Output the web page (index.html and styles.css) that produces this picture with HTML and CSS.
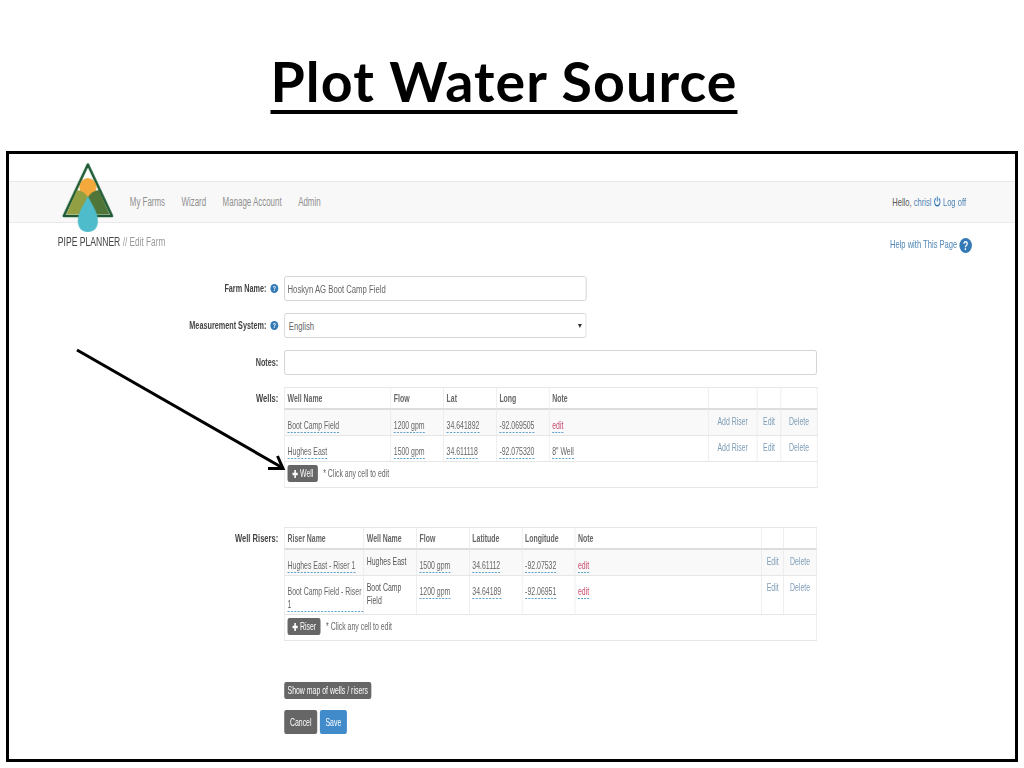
FILE: index.html
```html
<!DOCTYPE html>
<html lang="en">

<head>
    <meta charset="utf-8">
    <title>Plot Water Source</title>
    <link rel="stylesheet" href="styles.css">
</head>

<body>
    <div class="slide">
        <h1 class="slide-title"><span>Plot Water Source</span></h1>

        <div class="frame">
            <!-- the capture is squeezed sideways, so the page inside is laid out wide and scaled -->
            <div class="page">
                <nav class="navbar">
                    <svg class="logo" viewBox="62 162 52 71" preserveAspectRatio="none">
                        <path d="M88 164.500 L112 216 L64 216 Z" fill="#fff" stroke="#1e5b35" stroke-width="2.600" stroke-linejoin="round"/>
                        <ellipse cx="88" cy="187.500" rx="8.500" ry="9.500" fill="#f3a93c"/>
                        <path d="M66.500 214.500 L77 190 Q84 191 88 197 L88 214.500 Z" fill="#929f42"/>
                        <path d="M109.500 214.500 L99 190 Q92 191 88 197 L88 214.500 Z" fill="#4f7638"/>
                        <path d="M88 196 C92 205 98 212 98 221 C98 228 94 232 88 232 C82 232 78 228 78 221 C78 212 84 205 88 196 Z" fill="#4fbccb"/>
                    </svg>
                    <ul class="nav-links">
                        <li><a href="#">My Farms</a></li>
                        <li><a href="#">Wizard</a></li>
                        <li><a href="#">Manage Account</a></li>
                        <li><a href="#">Admin</a></li>
                    </ul>
                    <div class="nav-user">
                        Hello, <a href="#">chrisl</a>
                        <svg class="power" viewBox="0 0 12 12">
                            <path d="M3.500 2.500 A4.500 4.500 0 1 0 8.500 2.500" fill="none" stroke="#337ab7" stroke-width="1.600"/>
                            <path d="M6 0.500 V6" fill="none" stroke="#337ab7" stroke-width="1.600"/>
                        </svg>
                        <a href="#">Log off</a>
                    </div>
                </nav>

                <div class="subhead">
                    <div class="brand">PIPE PLANNER <span>// Edit Farm</span></div>
                    <a href="#" class="page-help">Help with This Page <span class="help-big">?</span></a>
                </div>

                <form class="farm-form">
                    <div class="form-row">
                        <label>Farm Name: <span class="help-dot">?</span></label>
                        <div class="field-box short">Hoskyn AG Boot Camp Field</div>
                    </div>
                    <div class="form-row">
                        <label>Measurement System: <span class="help-dot">?</span></label>
                        <div class="field-box short select">English <span class="caret"></span></div>
                    </div>
                    <div class="form-row">
                        <label>Notes:</label>
                        <div class="field-box"></div>
                    </div>

                    <div class="form-row wells-row">
                        <label class="table-label">Wells:</label>
                        <table class="grid wells">
                            <colgroup>
                                <col class="w161"><col class="w80"><col class="w80"><col class="w80"><col class="w241"><col class="w74"><col class="w36"><col class="w55">
                            </colgroup>
                            <thead>
                                <tr><th>Well Name</th><th>Flow</th><th>Lat</th><th>Long</th><th>Note</th><th></th><th></th><th></th></tr>
                            </thead>
                            <tbody>
                                <tr>
                                    <td><a class="editable">Boot Camp Field</a></td>
                                    <td><a class="editable">1200 gpm</a></td>
                                    <td><a class="editable">34.641892</a></td>
                                    <td><a class="editable">-92.069505</a></td>
                                    <td><a class="editable empty">edit</a></td>
                                    <td class="action"><a href="#">Add Riser</a></td>
                                    <td class="action"><a href="#">Edit</a></td>
                                    <td class="action"><a href="#">Delete</a></td>
                                </tr>
                                <tr>
                                    <td><a class="editable">Hughes East</a></td>
                                    <td><a class="editable">1500 gpm</a></td>
                                    <td><a class="editable">34.611118</a></td>
                                    <td><a class="editable">-92.075320</a></td>
                                    <td><a class="editable">8" Well</a></td>
                                    <td class="action"><a href="#">Add Riser</a></td>
                                    <td class="action"><a href="#">Edit</a></td>
                                    <td class="action"><a href="#">Delete</a></td>
                                </tr>
                            </tbody>
                            <tfoot>
                                <tr>
                                    <td colspan="8">
                                        <a class="btn btn-small"><svg class="plus" viewBox="0 0 10 10"><path d="M3.500 0 H6.500 V3.500 H10 V6.500 H6.500 V10 H3.500 V6.500 H0 V3.500 H3.500 Z" fill="#fff"/></svg> Well</a>
                                        <span class="hint">* Click any cell to edit</span>
                                    </td>
                                </tr>
                            </tfoot>
                        </table>
                    </div>

                    <div class="form-row risers-row">
                        <label class="table-label">Well Risers:</label>
                        <table class="grid risers">
                            <colgroup>
                                <col class="w120"><col class="w80"><col class="w80"><col class="w80"><col class="w80"><col class="w283"><col class="w33"><col class="w50">
                            </colgroup>
                            <thead>
                                <tr><th>Riser Name</th><th>Well Name</th><th>Flow</th><th>Latitude</th><th>Longitude</th><th>Note</th><th></th><th></th></tr>
                            </thead>
                            <tbody>
                                <tr>
                                    <td><a class="editable">Hughes East - Riser 1</a></td>
                                    <td>Hughes East</td>
                                    <td><a class="editable">1500 gpm</a></td>
                                    <td><a class="editable">34.61112</a></td>
                                    <td><a class="editable">-92.07532</a></td>
                                    <td><a class="editable empty">edit</a></td>
                                    <td class="action"><a href="#">Edit</a></td>
                                    <td class="action"><a href="#">Delete</a></td>
                                </tr>
                                <tr>
                                    <td><a class="editable">Boot Camp Field - Riser 1</a></td>
                                    <td>Boot Camp Field</td>
                                    <td><a class="editable">1200 gpm</a></td>
                                    <td><a class="editable">34.64189</a></td>
                                    <td><a class="editable">-92.06951</a></td>
                                    <td><a class="editable empty">edit</a></td>
                                    <td class="action"><a href="#">Edit</a></td>
                                    <td class="action"><a href="#">Delete</a></td>
                                </tr>
                            </tbody>
                            <tfoot>
                                <tr>
                                    <td colspan="8">
                                        <a class="btn btn-small"><svg class="plus" viewBox="0 0 10 10"><path d="M3.500 0 H6.500 V3.500 H10 V6.500 H6.500 V10 H3.500 V6.500 H0 V3.500 H3.500 Z" fill="#fff"/></svg> Riser</a>
                                        <span class="hint">* Click any cell to edit</span>
                                    </td>
                                </tr>
                            </tfoot>
                        </table>
                    </div>

                    <div class="form-row map-row">
                        <label></label>
                        <div><a class="btn btn-map">Show map of wells / risers</a></div>
                    </div>
                    <div class="form-row save-row">
                        <label></label>
                        <div class="save-btns">
                            <a class="btn btn-tall btn-cancel">Cancel</a>
                            <a class="btn btn-tall btn-save">Save</a>
                        </div>
                    </div>
                </form>
            </div>
        </div>

        <svg class="arrow" viewBox="0 0 1024 768">
            <path d="M77 350 L282 467.500" fill="none" stroke="#000" stroke-width="3"/>
            <path d="M268 468.500 H283 L277.500 456" fill="none" stroke="#000" stroke-width="3"/>
        </svg>
    </div>
</body>

</html>
```

FILE: styles.css
```css
body{
    margin: 0;
    padding: 0;
    background-color: #fff;
    font-family: "Liberation Sans", Arial, sans-serif;
}
a{
    text-decoration: none;
}
.slide{
    position: relative;
    width: 1024px;
    height: 768px;
    overflow: hidden;
}
.slide-title{
    margin: 0;
    height: 151px;
    padding: 48px 16px 0 0;
    box-sizing: border-box;
    text-align: center;
    font-family: Lato, "Open Sans", sans-serif;
    font-size: 55.500px;
    line-height: 66px;
    letter-spacing: 1.100px;
    font-weight: 700;
    color: #000;
}
.slide-title span{
    text-decoration: underline;
    text-decoration-thickness: 4px;
    text-underline-offset: 8px;
}
.frame{
    margin: 0 6px;
    height: 611px;
    box-sizing: border-box;
    border: 3px solid #000;
    overflow: hidden;
    padding-top: 27px;
}
.arrow{
    position: absolute;
    left: 0;
    top: 0;
    width: 1024px;
    height: 768px;
    pointer-events: none;
}

/* everything in here is in unsqueezed pixels: 1px wide = .66px on screen */
.page{
    position: relative;
    width: 1524px;
    transform: scaleX(.66);
    transform-origin: 0 0;
    font-size: 10.500px;
    line-height: 13px;
    color: #555;
}

.navbar{
    display: flex;
    align-items: center;
    justify-content: space-between;
    height: 42px;
    box-sizing: border-box;
    padding: 1px 74px 0 183px;
    background-color: #f8f8f8;
    border-top: 1px solid #e9e9e9;
    border-bottom: 1px solid #e9e9e9;
}
.logo{
    position: absolute;
    left: 80px;
    top: -19px;
    width: 79px;
    height: 71px;
}
.nav-links{
    display: flex;
    gap: 25px;
    list-style: none;
    margin: 0;
    padding: 0;
    font-size: 12px;
}
.nav-links a{
    color: #8f8f8f;
}
.nav-user{
    font-size: 11.500px;
    color: #555;
}
.nav-user a{
    color: #4f86b5;
}
.power{
    width: 11px;
    height: 11px;
    vertical-align: -1px;
}

.subhead{
    display: flex;
    justify-content: space-between;
    align-items: center;
    height: 37px;
    padding: 0 65px 0 74px;
}
.brand{
    font-size: 13px;
    color: #444;
}
.brand span{
    font-size: 12.500px;
    color: #999;
}
.page-help{
    margin-top: 7px;
    font-size: 11.500px;
    color: #4f86b5;
}
.help-big{
    display: inline-block;
    width: 19px;
    height: 15px;
    line-height: 15px;
    border-radius: 50%;
    background-color: #337ab7;
    color: #fff;
    font-weight: bold;
    font-size: 13px;
    text-align: center;
    vertical-align: -2px;
}

.farm-form{
    padding-top: 16px;
}
.form-row{
    display: grid;
    grid-template-columns: 408px 807px;
    column-gap: 9px;
    margin-bottom: 12px;
}
.form-row label{
    text-align: right;
    font-weight: bold;
    font-size: 11px;
    line-height: 25px;
    color: #444;
}
.form-row .table-label{
    font-size: 11.500px;
    line-height: 23px;
}
.help-dot{
    display: inline-block;
    width: 12px;
    height: 9px;
    line-height: 9px;
    margin-left: 3px;
    border-radius: 50%;
    background-color: #337ab7;
    color: #fff;
    font-size: 8px;
    text-align: center;
    vertical-align: 1px;
}
.field-box{
    height: 25px;
    box-sizing: border-box;
    padding: 0 4px;
    border: 1px solid #ccc;
    border-radius: 3px;
    background-color: #fff;
    line-height: 23px;
    font-size: 11.700px;
    color: #666;
}
.field-box.short{
    width: 458px;
}
.field-box.select{
    position: relative;
    padding-left: 6px;
}
.caret{
    position: absolute;
    right: 6px;
    top: 10px;
    border-top: 4px solid #333;
    border-left: 3px solid transparent;
    border-right: 3px solid transparent;
}

.grid{
    width: 807px;
    table-layout: fixed;
    border-collapse: collapse;
    border-top: 1px solid #ddd;
    font-size: 10.500px;
}
.grid th, .grid td{
    border: 1px solid #e6e6e6;
    padding: 5px 0 2px 4px;
    text-align: left;
    vertical-align: top;
}
.grid th{
    height: 13px;
    padding: 4px 0 3px 4px;
    font-weight: bold;
    color: #666;
    border-bottom: 2px solid #ddd;
}
.grid tbody tr:nth-child(odd){
    background-color: #f9f9f9;
}
.grid tfoot td{
    padding: 3px 4px 4px;
    height: 18px;
}
.w33{ width: 33px; }
.w36{ width: 36px; }
.w50{ width: 50px; }
.w55{ width: 55px; }
.w74{ width: 74px; }
.w80{ width: 80px; }
.w120{ width: 120px; }
.w161{ width: 161px; }
.w241{ width: 241px; }
.w283{ width: 283px; }

.editable{
    display: inline-block;
    vertical-align: top;
    margin-top: 4px;
    border-bottom: 1px dashed #3a8fc4;
    color: #666;
}
.editable.empty{
    color: #c9486b;
}
.grid .action{
    padding-left: 0;
    text-align: center;
}
.action a{
    color: #7d9db8;
}

.btn{
    display: inline-block;
    box-sizing: border-box;
    background-color: #666;
    color: #fff;
    border-radius: 3px;
    text-align: center;
}
.btn-small{
    height: 17px;
    padding: 0 7px;
    line-height: 17px;
}
.plus{
    width: 9px;
    height: 8px;
    vertical-align: -1px;
}
.hint{
    margin-left: 5px;
    color: #666;
}
.wells-row{
    margin-bottom: 0;
}
.risers-row{
    margin-top: 39px;
    margin-bottom: 41px;
}
.map-row{
    margin-bottom: 11px;
}
.btn-map{
    width: 132px;
    height: 17px;
    line-height: 17px;
}
.btn-tall{
    height: 24px;
    line-height: 24px;
}
.save-btns{
    display: flex;
    gap: 4px;
}
.btn-cancel{
    width: 50px;
}
.btn-save{
    width: 41px;
    background-color: #428bca;
}
```
